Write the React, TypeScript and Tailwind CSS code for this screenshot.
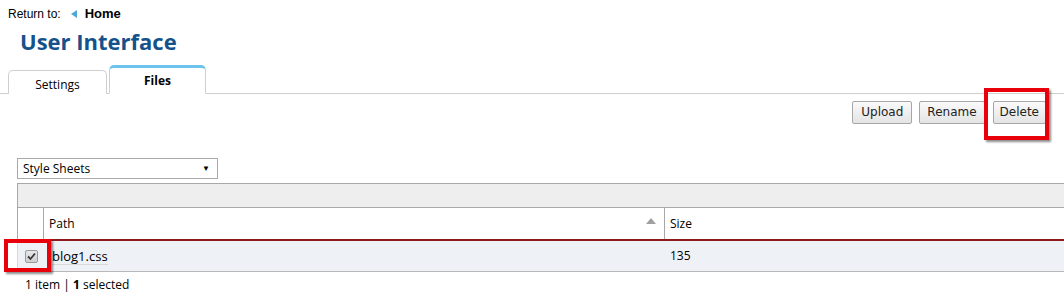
import React, {useState} from 'react';

const App = () => {
    const [checked, setChecked] = useState(true);
    const [tab, setTab] = useState('files');

    return (
        <div className="w-[1064px] h-[305px] bg-white overflow-hidden text-[12px] text-black" style={{fontFamily: '"Open Sans", "Noto Sans", sans-serif'}}>
            {/* breadcrumb */}
            <div className="flex items-center h-[18px] pl-[8px] pt-[9px]" style={{fontFamily: '"Liberation Sans", Arial, sans-serif'}}>
                <span className="text-[12px]">Return to:</span>
                <span className="ml-[10px] mr-[8px] w-0 h-0 border-y-[4px] border-y-transparent border-r-[6px] border-r-[#4aa8d8]"></span>
                <span className="font-bold text-[13px]">Home</span>
            </div>
            <h1 className="pl-[20px] mt-[12px] h-[22px] leading-[22px] text-[22px] font-bold text-[#15528c]">User Interface</h1>

            {/* tabs */}
            <div className="flex items-end mt-[14px] pl-[8px] border-b border-[#cfcfcf] h-[28px]">
                <button
                    onClick={() => setTab('settings')}
                    className="w-[99px] h-[24px] mb-[-1px] border border-[#cfcfcf] border-b-0 rounded-t-[5px] bg-white text-[12px] pt-[4px]">
                    Settings
                </button>
                <button
                    onClick={() => setTab('files')}
                    className="ml-[2px] w-[97px] h-[29px] mb-[-1px] border border-[#cfcfcf] border-b-white border-t-[3px] border-t-[#6cc4ec] rounded-t-[5px] bg-white text-[12px] font-bold">
                    Files
                </button>
                <span className="hidden">{tab}</span>
            </div>

            {/* actions */}
            <div className="flex justify-end items-center gap-[7px] pr-[18px] mt-[6px] h-[24px] text-[#222]" style={{fontFamily: '"DejaVu Sans", Verdana, sans-serif'}}>
                <button className="h-[23px] px-[8px] border border-[#a7a7a7] rounded-[2px] bg-gradient-to-b from-[#fafafa] to-[#e4e4e4] text-[12px] font-normal">Upload</button>
                <button className="h-[23px] px-[7px] border border-[#a7a7a7] rounded-[2px] bg-gradient-to-b from-[#fafafa] to-[#e4e4e4] text-[12px] font-normal">Rename</button>
                <div className="relative ml-[1px]">
                    <button className="h-[23px] px-[6px] border border-[#a7a7a7] rounded-[2px] bg-gradient-to-b from-[#fafafa] to-[#e4e4e4] text-[12px] font-normal">Delete</button>
                    <div className="absolute left-[-9px] top-[-13px] w-[65px] h-[52px] border-[4px] border-[#e8000b] shadow-[2px_2px_2px_rgba(0,0,0,0.45)] pointer-events-none"></div>
                </div>
            </div>

            {/* filter */}
            <div className="pl-[17px] mt-[34px]">
                <div className="relative w-[201px] h-[21px] border border-[#a9a9a9] bg-white flex items-center pl-[5px] text-[12px]">
                    Style Sheets
                    <span className="absolute right-[7px] top-[5px] text-[8px] leading-none">▼</span>
                </div>
            </div>

            {/* grid */}
            <div className="ml-[17px] mt-[4px]">
                <div className="h-[25px] bg-[#eeeeee] border-y border-l border-[#a8a8a8]"></div>
                <div className="flex h-[33px] border-l border-[#a8a8a8] border-b-2 border-b-[#8e1b1b]">
                    <div className="w-[26px] border-r border-[#a8a8a8]"></div>
                    <div className="relative w-[621px] border-r border-[#a8a8a8] flex items-center pl-[5px] text-[12px]">
                        Path
                        <span className="absolute right-[8px] top-[10px] w-0 h-0 border-x-[5px] border-x-transparent border-b-[6px] border-b-[#a0a0a0]"></span>
                    </div>
                    <div className="flex-1 flex items-center pl-[5px] text-[12px]">Size</div>
                </div>
                <div className="relative flex h-[31px] bg-[#eef1f6] border-l border-[#d8d8d8] border-b border-b-[#b8b8b8]">
                    <div className="w-[26px] flex items-center justify-center">
                        <button
                            onClick={() => setChecked(!checked)}
                            className="w-[13px] h-[13px] rounded-[2px] border border-[#9a9a9a] bg-gradient-to-b from-[#e8e8e8] to-[#cfcfcf] flex items-center justify-center">
                            {checked && (
                                <svg width="9" height="9" viewBox="0 0 9 9">
                                    <path d="M1 4.5 L3.5 7 L8 1.5" fill="none" stroke="#3a3a3a" strokeWidth="1.8"/>
                                </svg>
                            )}
                        </button>
                    </div>
                    <div className="w-[621px] flex items-center pl-[8px] text-[13px]">
                        <span className="border-b border-[#d8d8d8] leading-[16px]">blog1.css</span>
                    </div>
                    <div className="flex-1 flex items-center pl-[5px] text-[12px]">135</div>
                    <div className="absolute left-[-14px] top-[-2px] w-[47px] h-[33px] border-[4px] border-[#e8000b] shadow-[2px_2px_2px_rgba(0,0,0,0.45)] pointer-events-none"></div>
                </div>
            </div>

            {/* footer */}
            <div className="pl-[25px] mt-[4px] text-[12px]">
                1 item | <span className="font-bold">1</span> selected
            </div>
        </div>
    );
}

export default App;
